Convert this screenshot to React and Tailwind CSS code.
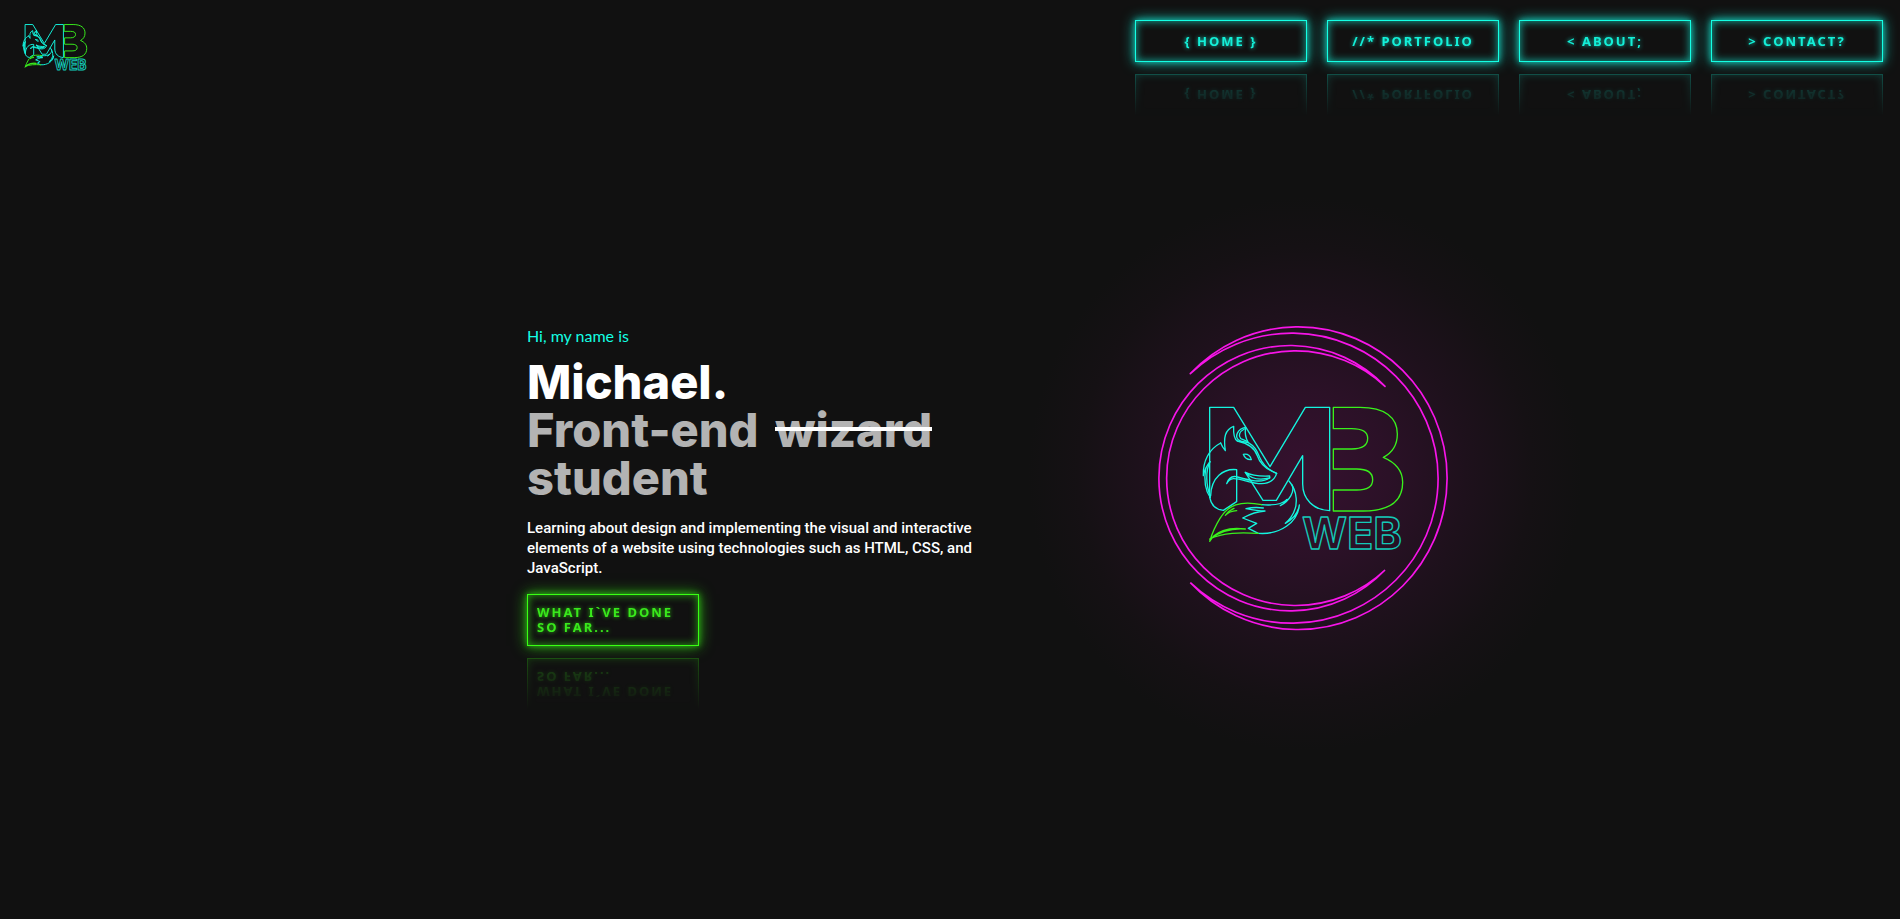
const navItems = [
  { label: "{ Home }", href: "#home" },
  { label: "//* Portfolio", href: "#portfolio" },
  { label: "< About;", href: "#about" },
  { label: "> Contact?", href: "#contact" },
];

const neonBase =
  "flex w-43 items-center border px-[9px] py-2.5 font-['Noto_Sans',sans-serif] text-[13px] leading-[15px] font-bold tracking-[2px] uppercase [-webkit-box-reflect:below_12px_linear-gradient(transparent,rgba(0,0,0,0.25))]";

function NeonLink({ href, tone, className, children }) {
  const tones = {
    aqua: "border-[#14ffe4] text-[#14f0d8] [box-shadow:0_0_6px_#14b8a8,0_0_14px_#14b8a8,inset_0_0_8px_#12b8a6] [text-shadow:0_0_4px_#14d9c4]",
    lime: "border-[#39ff14] text-[#39e81c] [box-shadow:0_0_6px_#2aa814,0_0_14px_#2aa814,inset_0_0_8px_#2aa814] [text-shadow:0_0_4px_#2fc912]",
  };
  return (
    <a href={href} className={`${neonBase} ${tones[tone]} ${className}`}>
      {children}
    </a>
  );
}

function FoxMark({ sw }) {
  return (
    <g fill="none" strokeWidth={sw} strokeLinejoin="round" strokeLinecap="round">
      <g stroke="#14f5df">
        {/* monogram, left half */}
        <path d="M209 565V295H281L390 473L496 295H569V605C520 603 488 570 488 525V440L409 574H369L316 490" />
        {/* chest */}
        <path d="M212 560C214 505 250 478 290 482V578L250 604C228 602 214 590 209 565" />
        {/* mane */}
        <path d="M242 402C208 420 188 455 190 500C193 485 200 470 210 458" />
        <path d="M197 478C192 510 196 545 211 566" />
        <path d="M210 458C196 485 198 530 211 562" />
        {/* ears */}
        <path d="M242 402C246 412 250 418 256 425C250 385 255 362 281 352C280 372 282 390 292 396" />
        <path d="M317 355C292 360 284 382 295 392C303 399 314 398 325 401C317 388 314 372 317 355Z" />
        <path d="M313 360C298 368 294 380 302 389L322 397" />
        {/* head and muzzle */}
        <path d="M292 396C330 404 345 420 352 440C362 470 385 484 410 493C404 512 392 523 365 524C330 524 305 508 280 509C270 510 264 517 260 524C266 506 274 500 289 503C325 513 365 525 389 506" />
        <path d="M325 401C348 414 352 430 360 447C370 470 388 484 410 493" />
        <path d="M316 490C335 500 365 502 389 501L389 507C360 514 333 510 316 490Z" />
        <path d="M310 436C322 434 331 441 334 452C322 453 314 447 310 436Z" />
        {/* tail */}
        <path d="M365 587C400 590 425 588 441 571C434 582 429 586 421 590C450 575 465 545 456 528" />
        <path d="M447 516C472 545 478 590 452 626C446 634 442 638 436 643C460 630 474 612 478 588C474 640 420 678 355 673L325 658L350 643L308 627C325 618 345 608 375 606C355 606 338 603 318 599C335 595 350 594 370 597" />
      </g>
      <g stroke="#39f01c">
        <path d="M365 587C300 574 264 588 240 628C225 652 216 674 209 697C225 668 265 652 316 660C280 657 245 664 209 690C250 670 300 670 355 673" />
        <path d="M290 605C275 606 265 610 256 619C264 607 272 602 282 598" />
        {/* monogram, right half */}
        <path d="M580 295H660C735 295 772 325 772 375C772 410 755 432 730 445C770 462 788 485 788 520C788 575 750 606 670 606H580V543H650C680 543 698 535 698 512C698 490 682 480 650 480H580V420H635C668 420 683 408 683 388C683 368 668 359 635 359H580Z" />
      </g>
      <text
        x="486"
        y="719"
        fontSize="130"
        stroke="#14c9b8"
        className="font-['Inter',sans-serif] font-bold"
      >
        WEB
      </text>
    </g>
  );
}

export default function App() {
  return (
    <div className="min-h-screen bg-[#111111] text-white">
      <header className="flex items-start justify-between pt-5 pr-[17px] pl-[22px]">
        <a href="#home" aria-label="MB Web" className="h-[62px] pt-1">
          <svg viewBox="180 290 620 480" className="w-[66px]">
            <FoxMark sw={9} />
          </svg>
        </a>
        <nav className="flex gap-5">
          {navItems.map((item) => (
            <NeonLink key={item.href} href={item.href} tone="aqua" className="h-[42px] justify-center">
              {item.label}
            </NeonLink>
          ))}
        </nav>
      </header>

      <main className="flex items-start justify-center gap-[138px] pt-[227px] pl-[97px]">
        <section className="w-[475px] pt-[17px]">
          <p className="font-['Lato',sans-serif] text-[16px] leading-5 text-[#14ffe4]">Hi, my name is</p>
          <h1 className="mt-3 font-['Inter',sans-serif] text-[47px] leading-[48px] font-extrabold">
            Michael.
            <span className="block text-[#b3b3b3]">
              Front-end{" "}
              <s className="relative ml-1.5 inline-block no-underline after:absolute after:inset-x-0 after:top-[21px] after:h-1 after:bg-white">
                wizard
              </s>{" "}
              student
            </span>
          </h1>
          <p className="mt-4 font-['Roboto',sans-serif] text-[15px] leading-5 font-medium">
            Learning about design and implementing the visual and interactive elements of a website using
            technologies such as HTML, CSS, and JavaScript.
          </p>
          <NeonLink href="#portfolio" tone="lime" className="mt-4">
            What I`ve done so far...
          </NeonLink>
        </section>

        <div className="relative w-[330px]">
          <div className="absolute -inset-28 bg-[radial-gradient(circle_closest-side,#36112f,#2b1127_30%,#1e111c_58%,#151114_82%,#111111)]" />
          <svg viewBox="0 0 990 990" className="relative w-full" role="img" aria-label="MB Web fox logo">
            <g fill="none" stroke="#f715e8" strokeWidth="5" strokeLinecap="round">
              <path d="M151 194A447 454 0 1 1 151 821A439 435 0 1 0 151 194" />
              <path d="M735 232A394 398 0 1 0 735 783A387 382 0 1 1 735 232" />
            </g>
            <FoxMark sw={4} />
          </svg>
        </div>
      </main>
    </div>
  );
}
